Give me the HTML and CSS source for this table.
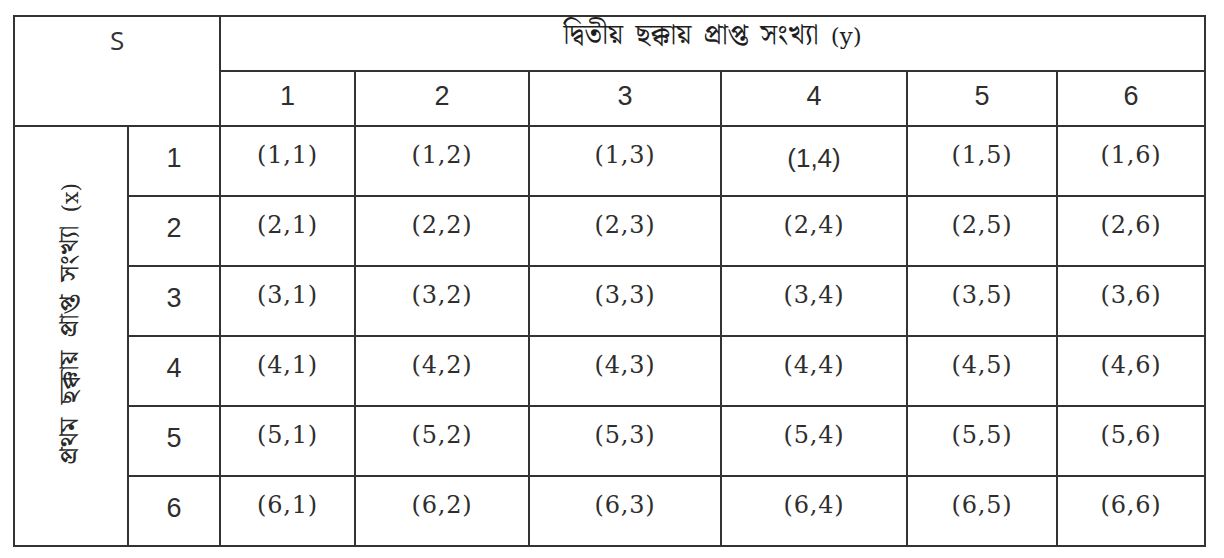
FILE: index.html
```html
<!DOCTYPE html>
<html lang="bn">
<head>
<meta charset="utf-8">
<title>Sample space</title>
<link rel="stylesheet" href="styles.css">
</head>
<body>
<table class="grid">
  <colgroup>
    <col class="c-lab"><col class="c-num"><col class="c1"><col class="c2"><col class="c3"><col class="c4"><col class="c5"><col class="c6">
  </colgroup>
  <tr class="hrow">
    <td class="s-cell" colspan="2" rowspan="2">S</td>
    <td class="bn-head" colspan="6">দ্বিতীয় ছক্কায় প্রাপ্ত সংখ্যা <span class="var">(y)</span></td>
  </tr>
  <tr class="hrow">
    <td class="num">1</td><td class="num">2</td><td class="num">3</td><td class="num">4</td><td class="num">5</td><td class="num">6</td>
  </tr>
  <tr class="brow">
    <td class="side" rowspan="6"><span class="vtext">প্রথম ছক্কায় প্রাপ্ত সংখ্যা <span class="var">(x)</span></span></td>
    <td class="num">1</td>
    <td class="pair">(1,1)</td><td class="pair">(1,2)</td><td class="pair">(1,3)</td><td class="pair sans">(1,4)</td><td class="pair">(1,5)</td><td class="pair">(1,6)</td>
  </tr>
  <tr class="brow">
    <td class="num">2</td>
    <td class="pair">(2,1)</td><td class="pair">(2,2)</td><td class="pair">(2,3)</td><td class="pair">(2,4)</td><td class="pair">(2,5)</td><td class="pair">(2,6)</td>
  </tr>
  <tr class="brow">
    <td class="num">3</td>
    <td class="pair">(3,1)</td><td class="pair">(3,2)</td><td class="pair">(3,3)</td><td class="pair">(3,4)</td><td class="pair">(3,5)</td><td class="pair">(3,6)</td>
  </tr>
  <tr class="brow">
    <td class="num">4</td>
    <td class="pair">(4,1)</td><td class="pair">(4,2)</td><td class="pair">(4,3)</td><td class="pair">(4,4)</td><td class="pair">(4,5)</td><td class="pair">(4,6)</td>
  </tr>
  <tr class="brow">
    <td class="num">5</td>
    <td class="pair">(5,1)</td><td class="pair">(5,2)</td><td class="pair">(5,3)</td><td class="pair">(5,4)</td><td class="pair">(5,5)</td><td class="pair">(5,6)</td>
  </tr>
  <tr class="brow">
    <td class="num">6</td>
    <td class="pair">(6,1)</td><td class="pair">(6,2)</td><td class="pair">(6,3)</td><td class="pair">(6,4)</td><td class="pair">(6,5)</td><td class="pair">(6,6)</td>
  </tr>
</table>
</body>
</html>
```
FILE: styles.css
```css
html, body {
  margin: 0;
  padding: 0;
  background: #ffffff;
}

body {
  padding: 15px 0 0 13px;
  font-family: "Liberation Sans", Arial, sans-serif;
  color: #2b2b2b;
}

.grid {
  border-collapse: collapse;
  table-layout: fixed;
  width: 1193px;
}

.grid td {
  border: 2px solid #333333;
  padding: 0;
  text-align: center;
}

.c-lab { width: 114px; }
.c-num { width: 92px; }
.c1 { width: 135px; }
.c2 { width: 174px; }
.c3 { width: 192px; }
.c4 { width: 186px; }
.c5 { width: 150px; }
.c6 { width: 148px; }

.hrow { height: 55px; }
.brow { height: 70px; }

.s-cell {
  vertical-align: top;
  padding-top: 8px !important;
  font-family: "Open Sans", sans-serif;
  font-size: 26px;
  line-height: 30px;
  color: #333;
}

.bn-head {
  vertical-align: top;
  padding-top: 1px !important;
  font-family: "Noto Serif Bengali", "Noto Sans Bengali", "Lohit Bengali", sans-serif;
  font-size: 28px;
  line-height: 36px;
  word-spacing: 5px;
  color: #1e1e1e;
}

.var {
  font-family: "DejaVu Serif", serif;
  font-size: 23px;
}

.num {
  vertical-align: middle;
  padding-bottom: 6px !important;
  font-family: "Liberation Sans", Arial, sans-serif;
  font-size: 27px;
  line-height: 30px;
  color: #2e2e2e;
}

.pair {
  vertical-align: middle;
  padding-bottom: 12px !important;
  font-family: "DejaVu Serif", serif;
  font-size: 24px;
  line-height: 30px;
  letter-spacing: 0.8px;
  color: #2e2e2e;
}

.pair.sans {
  font-family: "Liberation Sans", Arial, sans-serif;
  font-size: 26px;
  letter-spacing: 0;
  padding-bottom: 6px !important;
}

.side {
  vertical-align: middle;
  padding-bottom: 20px !important;
}

.vtext {
  display: inline-block;
  writing-mode: vertical-rl;
  transform: rotate(180deg);
  font-family: "Noto Serif Bengali", "Noto Sans Bengali", "Lohit Bengali", sans-serif;
  font-size: 27px;
  line-height: 32px;
  word-spacing: 6px;
  color: #2a2a2a;
  white-space: nowrap;
}

.vtext .var {
  font-size: 22px;
}
```
